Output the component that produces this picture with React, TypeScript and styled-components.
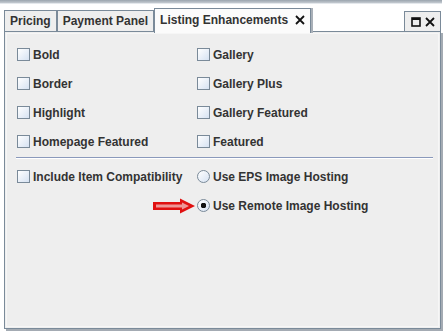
import React from "react";
import styled, { createGlobalStyle } from "styled-components";

const Global = createGlobalStyle`
  html, body { margin: 0; padding: 0; background: #ffffff; }
  body { width: 445px; height: 334px; overflow: hidden; font-family: "Liberation Sans", Arial, sans-serif; }
`;

const Page = styled.div`
  width: 445px;
  height: 334px;
  display: flex;
  flex-direction: column;
`;

const TopEdge = styled.div`
  height: 3px;
  margin-right: 3px;
  background: linear-gradient(#9aa4ae, #c4cad0);
  border-bottom: 1px solid #e4e8ec;
`;

const Frame = styled.div`
  display: flex;
  flex-direction: column;
  padding: 4px 4px 0 4px;
`;

const TabStrip = styled.div`
  display: flex;
  align-items: flex-end;
  height: 23px;
  position: relative;
  z-index: 1;
`;

const Tab = styled.div<{ $active?: boolean }>`
  box-sizing: border-box;
  height: ${(p) => (p.$active ? "25px" : "21px")};
  margin-bottom: ${(p) => (p.$active ? "-2px" : "0")};
  padding: 0 5px 0 5px;
  padding-bottom: ${(p) => (p.$active ? "2px" : "0")};
  display: flex;
  align-items: center;
  gap: 7px;
  border: 1px solid #7a8a99;
  border-bottom: none;
  background: ${(p) => (p.$active ? "#fbfbfb" : "#eeeeee")};
  box-shadow: ${(p) => (p.$active ? "2px 0 0 #a9b0b8" : "none")};
  font-size: 12px;
  font-weight: bold;
  color: #333333;
  white-space: nowrap;
  & + & { border-left: ${(p) => (p.$active ? "1px solid #7a8a99" : "none")}; }
`;

const Spacer = styled.div`
  flex: 1;
`;

const WinControls = styled.div`
  box-sizing: border-box;
  height: 20px;
  width: 37px;
  display: flex;
  align-items: center;
  justify-content: center;
  gap: 4px;
  padding-top: 1px;
  border: 1px solid #7a8a99;
  border-bottom: none;
  background: #eeeeee;
`;

const Panel = styled.div`
  box-sizing: border-box;
  height: 298px;
  border: 1px solid #7a8a99;
  background: #eeeeee;
  box-shadow: 2px 2px 0 #a4abb3;
  padding: 1px;
`;

const Inner = styled.div`
  box-sizing: border-box;
  height: 100%;
  border: 1px solid #f6f6f6;
  background: #eeeeee;
  padding: 6px 5px 0 10px;
  display: flex;
  flex-direction: column;
`;

const Grid = styled.div`
  display: grid;
  grid-template-columns: 180px 1fr;
  grid-auto-rows: 29px;
`;

const Item = styled.div<{ $end?: boolean }>`
  display: flex;
  align-items: center;
  justify-content: ${(p) => (p.$end ? "flex-end" : "flex-start")};
  gap: 3px;
  font-size: 12px;
  font-weight: bold;
  color: #333333;
  white-space: nowrap;
`;

const Box = styled.span`
  box-sizing: border-box;
  width: 13px;
  height: 13px;
  border: 1px solid #7a8a99;
  background: linear-gradient(135deg, #ffffff 0%, #d6e2f2 100%);
  flex: none;
`;

const Radio = styled.span<{ $on?: boolean }>`
  box-sizing: border-box;
  width: 13px;
  height: 13px;
  border-radius: 50%;
  border: 1px solid #7a8a99;
  background: ${(p) => (p.$on ? "radial-gradient(circle, #111 0 2.6px, transparent 3px), " : "")}linear-gradient(135deg, #ffffff 0%, #d6e2f2 100%);
  flex: none;
`;

const Separator = styled.div`
  height: 0;
  border-top: 1px solid #8a99bb;
  border-bottom: 1px solid #ffffff;
  margin: 1px 0 3px -1px;
`;

const Arrow = () => (
  <svg width="44" height="16" viewBox="0 0 44 16" style={{ marginRight: 1 }}>
    <path d="M1 4 H28 V0.5 L43 8 L28 15.5 V12 H1 Z" fill="#e01010" />
    <path d="M4 6.5 H30 V4.5 L37 8 L30 11.5 V9.5 H4 Z" fill="#f4d0d0" opacity="0.7" />
  </svg>
);

const MaxIcon = () => (
  <svg width="10" height="10" viewBox="0 0 10 10">
    <rect x="1" y="1" width="8" height="8" fill="none" stroke="#111" strokeWidth="1.6" />
    <line x1="1" y1="2" x2="9" y2="2" stroke="#111" strokeWidth="2" />
  </svg>
);

const CloseIcon = ({ size = 10 }: { size?: number }) => (
  <svg width={size} height={size} viewBox="0 0 10 10">
    <path d="M1 1 L9 9 M9 1 L1 9" stroke="#111" strokeWidth="1.8" />
  </svg>
);

const left = ["Bold", "Border", "Highlight", "Homepage Featured"];
const right = ["Gallery", "Gallery Plus", "Gallery Featured", "Featured"];

export default function App() {
  return (
    <Page>
      <Global />
      <TopEdge />
      <Frame>
        <TabStrip>
          <Tab>Pricing</Tab>
          <Tab>Payment Panel</Tab>
          <Tab $active>
            Listing Enhancements
            <CloseIcon />
          </Tab>
          <Spacer />
          <WinControls>
            <MaxIcon />
            <CloseIcon size={10} />
          </WinControls>
        </TabStrip>
        <Panel>
          <Inner>
            <Grid>
              {left.map((l, i) => (
                <React.Fragment key={l}>
                  <Item>
                    <Box />
                    {l}
                  </Item>
                  <Item>
                    <Box />
                    {right[i]}
                  </Item>
                </React.Fragment>
              ))}
            </Grid>
            <Separator />
            <Grid>
              <Item>
                <Box />
                Include Item Compatibility
              </Item>
              <Item>
                <Radio />
                Use EPS Image Hosting
              </Item>
              <Item $end>
                <Arrow />
              </Item>
              <Item>
                <Radio $on />
                Use Remote Image Hosting
              </Item>
            </Grid>
          </Inner>
        </Panel>
      </Frame>
    </Page>
  );
}
